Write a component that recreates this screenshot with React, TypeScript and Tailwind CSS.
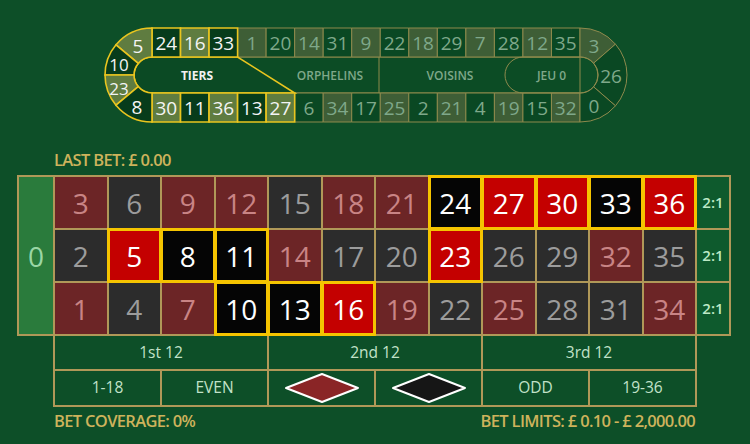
import React from 'react';

const RED = new Set([1, 3, 5, 7, 9, 12, 14, 16, 18, 19, 21, 23, 25, 27, 30, 32, 34, 36]);
const TIERS = new Set([5, 8, 10, 11, 13, 16, 23, 24, 27, 30, 33, 36]);

const TOP = [24, 16, 33, 1, 20, 14, 31, 9, 22, 18, 29, 7, 28, 12, 35];
const BOTTOM = [30, 11, 36, 13, 27, 6, 34, 17, 25, 2, 21, 4, 19, 15, 32];

// racetrack geometry (page coordinates)
const X0 = 152;
const X1 = 580;
const CY = 75;
const RO = 47;
const RI = 18;
const W = (X1 - X0) / 15;

const LINE_DIM = '#8e8a4d';
const LINE_HI = '#e9c51f';

function pt(cx: number, r: number, a: number) {
  const rad = (a * Math.PI) / 180;
  return [cx + r * Math.cos(rad), CY - r * Math.sin(rad)];
}

function sector(cx: number, a1: number, a2: number) {
  const [x1, y1] = pt(cx, RO, a1);
  const [x2, y2] = pt(cx, RO, a2);
  const [x3, y3] = pt(cx, RI, a2);
  const [x4, y4] = pt(cx, RI, a1);
  return `M${x1},${y1} A${RO},${RO} 0 0 0 ${x2},${y2} L${x3},${y3} A${RI},${RI} 0 0 1 ${x4},${y4} Z`;
}

function trackFill(n: number) {
  const hi = TIERS.has(n);
  if (n !== 0 && RED.has(n)) return hi ? '#5f7c40' : '#3e5e36';
  return hi ? '#073c1b' : '#0a4823';
}

interface TrackCell {
  n: number;
  d: string;
  tx: number;
  ty: number;
  size?: number;
}

const trackCells: TrackCell[] = [
  ...TOP.map((n, i) => ({
    n,
    d: `M${X0 + i * W},28 H${X0 + (i + 1) * W} V57 H${X0 + i * W} Z`,
    tx: X0 + (i + 0.5) * W,
    ty: 43,
  })),
  ...BOTTOM.map((n, i) => ({
    n,
    d: `M${X0 + i * W},93 H${X0 + (i + 1) * W} V122 H${X0 + i * W} Z`,
    tx: X0 + (i + 0.5) * W,
    ty: 108,
  })),
  { n: 5, d: sector(X0, 90, 140), tx: 138, ty: 46 },
  { n: 10, d: sector(X0, 140, 180), tx: 119, ty: 64, size: 17 },
  { n: 23, d: sector(X0, 180, 220), tx: 119, ty: 88, size: 17 },
  { n: 8, d: sector(X0, 220, 270), tx: 137, ty: 107 },
  { n: 3, d: sector(X1, 41, 90), tx: 594, ty: 46 },
  { n: 26, d: sector(X1, -41, 41), tx: 611, ty: 76 },
  { n: 0, d: sector(X1, -90, -41), tx: 594, ty: 106 },
];

function Racetrack() {
  const dim = trackCells.filter((c) => !TIERS.has(c.n));
  const hi = trackCells.filter((c) => TIERS.has(c.n));
  return (
    <svg width={530} height={98} viewBox="100 26 530 98" className="block font-['Open_Sans',sans-serif]">
      {/* middle band */}
      <rect x={X0} y={57} width={X1 - X0} height={36} fill="#0c4c25" stroke={LINE_DIM} strokeWidth={1} />
      {dim.map((c) => (
        <path key={c.n} d={c.d} fill={trackFill(c.n)} stroke={LINE_DIM} strokeWidth={1} />
      ))}
      <line x1={379} y1={57} x2={379} y2={93} stroke={LINE_DIM} strokeWidth={1} />
      <path d={`M523,57 H580 A18,18 0 0 1 580,93 H523 A18,18 0 0 1 523,57 Z`} fill="none" stroke={LINE_DIM} strokeWidth={1} />
      {/* tiers band */}
      <path
        d={`M${X0},57 H${X0 + 3 * W} L${X0 + 5 * W},93 H${X0} A18,18 0 0 1 ${X0},57 Z`}
        fill="#0b4a24"
        stroke={LINE_HI}
        strokeWidth={1.6}
      />
      {hi.map((c) => (
        <path key={c.n} d={c.d} fill={trackFill(c.n)} stroke={LINE_HI} strokeWidth={1.6} />
      ))}
      {trackCells.map((c) => (
        <text
          key={'t' + c.n}
          x={c.tx}
          y={c.ty}
          textAnchor="middle"
          dominantBaseline="central"
          fontSize={c.size ?? 19}
          fill={TIERS.has(c.n) ? '#f4f4f4' : '#7fa88a'}
        >
          {c.n}
        </text>
      ))}
      <text x={197} y={75} textAnchor="middle" dominantBaseline="central" fontSize={12} fontWeight={700} fill="#f2f2f2">
        TIERS
      </text>
      <text x={330} y={75} textAnchor="middle" dominantBaseline="central" fontSize={12} fontWeight={600} fill="#7fa88a">
        ORPHELINS
      </text>
      <text x={450} y={75} textAnchor="middle" dominantBaseline="central" fontSize={12} fontWeight={600} fill="#7fa88a">
        VOISINS
      </text>
      <text x={551.5} y={75} textAnchor="middle" dominantBaseline="central" fontSize={12} fontWeight={600} fill="#7fa88a">
        JEU 0
      </text>
    </svg>
  );
}

function NumberCell({ n }: { n: number }) {
  const red = RED.has(n);
  if (TIERS.has(n)) {
    return (
      <div
        className={`relative z-10 flex items-center justify-center text-[28px] text-white shadow-[0_0_0_2px_#f5c400,inset_0_0_0_1px_#f5c400] ${
          red ? 'bg-[#c40000]' : 'bg-[#050505]'
        }`}
      >
        {n}
      </div>
    );
  }
  return (
    <div
      className={`flex items-center justify-center text-[28px] ${
        red ? 'bg-[#6c2526] text-[#c98485]' : 'bg-[#2c2c2c] text-[#9c9c9c]'
      }`}
    >
      {n}
    </div>
  );
}

function Diamond({ fill }: { fill: string }) {
  return (
    <svg width={76} height={32} viewBox="0 0 76 32">
      <polygon points="2,16 38,2 74,16 38,30" fill={fill} stroke="#ffffff" strokeWidth={2} strokeLinejoin="round" />
    </svg>
  );
}

export default function App() {
  const rows = [0, 1, 2];
  const cols = Array.from({ length: 12 }, (_, i) => i);

  return (
    <div className="w-[750px] h-[444px] overflow-hidden bg-[#0d4f28] font-['Open_Sans',sans-serif]">
      <div className="pl-[100px] pt-[26px]">
        <Racetrack />
      </div>

      <div className="ml-[54px] mt-[26px] h-[20px] text-[16.5px] leading-[20px] font-semibold tracking-[-0.04em] text-[#cdb35c]">
        LAST BET: £ 0.00
      </div>

      <div className="ml-[17px] mt-[5px] w-[714px]">
        <div className="grid grid-cols-[34px_repeat(12,minmax(0,1fr))_32px] grid-rows-[repeat(3,51px)] gap-[2px] p-[2px] bg-[#b09858]">
          <div className="row-span-3 flex items-center justify-center bg-[#2a7b3c] text-[28px] text-[#9ad6a5]">0</div>
          {rows.map((r) => (
            <React.Fragment key={r}>
              {cols.map((c) => (
                <NumberCell key={c} n={3 * c + 3 - r} />
              ))}
              <div className="flex items-center justify-center bg-[#0e5a2d] text-[15px] font-semibold text-[#bde9c6]">
                2:1
              </div>
            </React.Fragment>
          ))}
        </div>

        <div className="ml-[36px] w-[644px] grid grid-cols-6 grid-rows-[33px_34px] gap-[2px] px-[2px] pb-[2px] bg-[#b09858] text-[15.5px] text-[#c2e2c9]">
          <div className="col-span-2 flex items-center justify-center bg-[#0d4f28]">1st 12</div>
          <div className="col-span-2 flex items-center justify-center bg-[#0d4f28]">2nd 12</div>
          <div className="col-span-2 flex items-center justify-center bg-[#0d4f28]">3rd 12</div>
          <div className="flex items-center justify-center bg-[#0d4f28]">1-18</div>
          <div className="flex items-center justify-center bg-[#0d4f28]">EVEN</div>
          <div className="flex items-center justify-center bg-[#0d4f28]">
            <Diamond fill="#8a2526" />
          </div>
          <div className="flex items-center justify-center bg-[#0d4f28]">
            <Diamond fill="#161616" />
          </div>
          <div className="flex items-center justify-center bg-[#0d4f28]">ODD</div>
          <div className="flex items-center justify-center bg-[#0d4f28]">19-36</div>
        </div>
      </div>

      <div className="ml-[54px] mt-[4px] w-[641px] flex justify-between text-[16.5px] leading-[20px] font-semibold tracking-[-0.04em] text-[#cdb35c]">
        <span>BET COVERAGE: 0%</span>
        <span>BET LIMITS: £ 0.10 - £ 2,000.00</span>
      </div>
    </div>
  );
}
